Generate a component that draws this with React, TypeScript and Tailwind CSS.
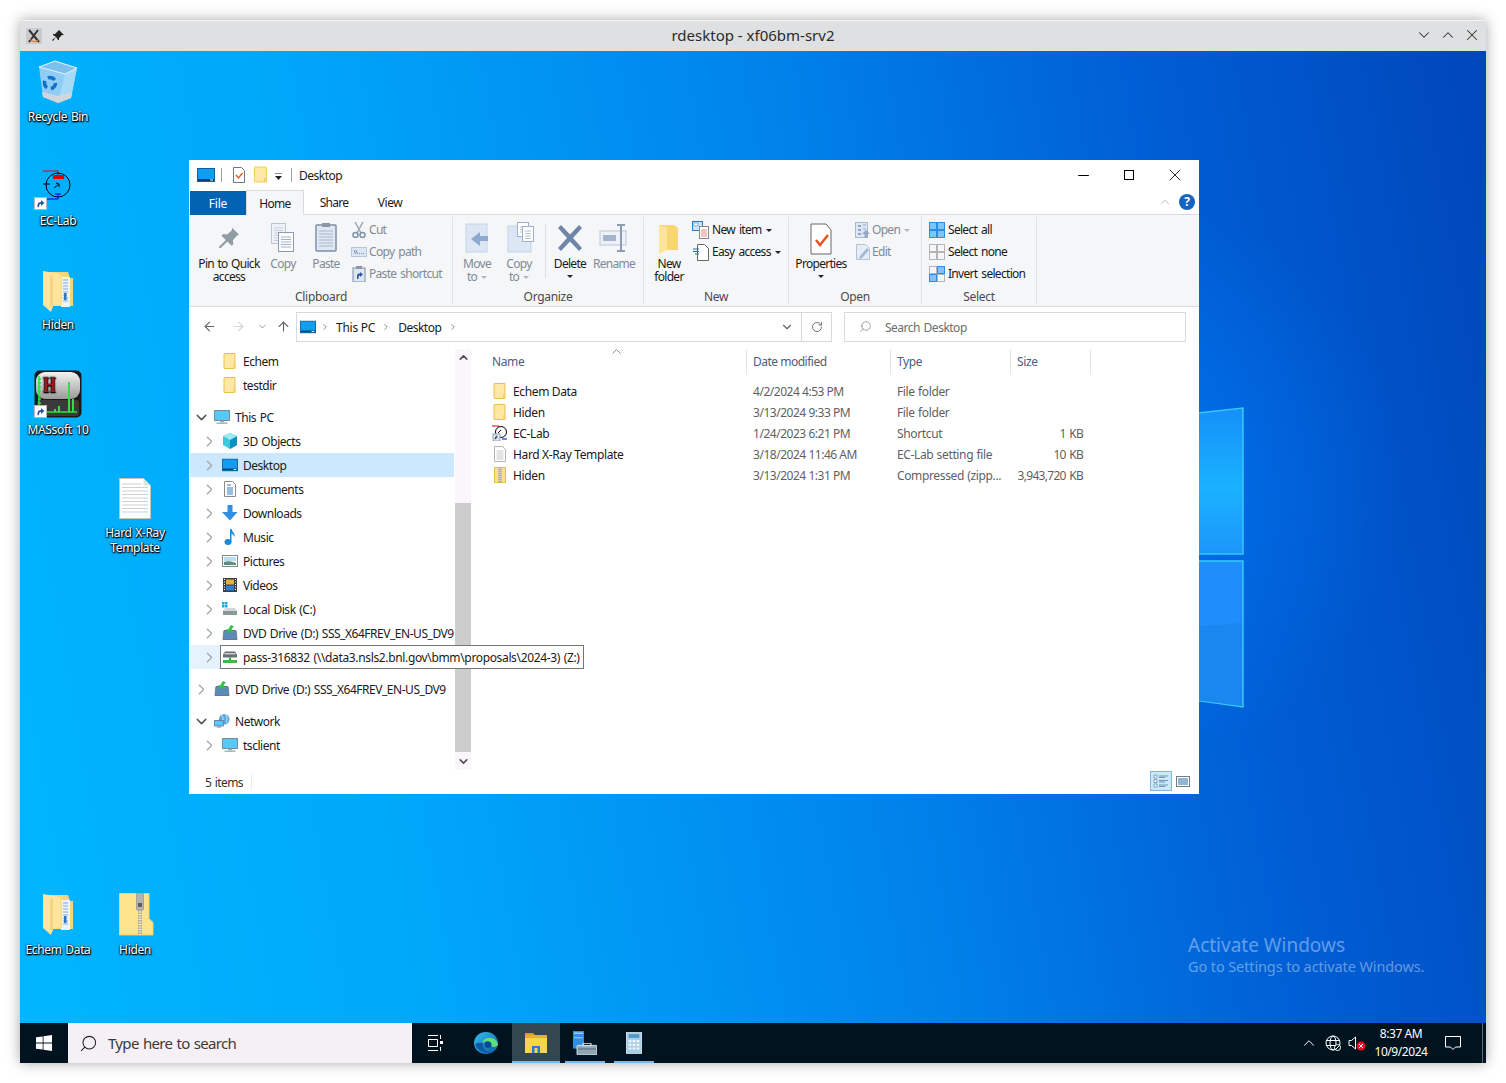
import { ArrowLeft, ArrowRight, ArrowUp, ChevronDown, ChevronRight, ChevronUp, Minus, RotateCw, Search, X } from 'lucide-react';
import type { ReactNode } from 'react';

/* ---------- small drawn icons ---------- */

function SmallFolder() {
  return (
    <svg width="16" height="16" viewBox="0 0 16 16">
      <path d="M2.5 .5h10.5v15h-10.5a.5 .5 0 0 1-.5-.5v-14a.5 .5 0 0 1 .5-.5z" fill="#ffe8a3" stroke="#e9c04c" />
      <rect x="11" y="11" width="2.5" height="4.5" fill="#f6d467" />
    </svg>
  );
}

function ZipSmall() {
  return (
    <svg width="16" height="16" viewBox="0 0 16 16">
      <rect x="2.5" y=".5" width="11" height="15" fill="#ffe08a" stroke="#e9c04c" />
      <rect x="6.5" y=".5" width="3" height="15" fill="#a8a8a8" />
      <path d="M8 1v14" stroke="#fff" strokeDasharray="1 1" />
    </svg>
  );
}

function PageSmall() {
  return (
    <svg width="16" height="16" viewBox="0 0 16 16">
      <path d="M2.5 .5h8l3 3v12h-11z" fill="#fff" stroke="#b5b5b5" />
      <path d="M4.5 5h7M4.5 7h7M4.5 9h7M4.5 11h7M4.5 13h7" stroke="#c8c8c8" />
    </svg>
  );
}

function EcLabSmall() {
  return (
    <svg width="16" height="16" viewBox="0 0 16 16">
      <path d="M0 1h7" stroke="#e00000" />
      <rect x="6" y="2" width="6" height="2" fill="#e00000" />
      <circle cx="9" cy="7" r="5.5" fill="#fff" stroke="#000" />
      <path d="M6 8l3-3" stroke="#000" />
      <path d="M10 14h5" stroke="#0000e0" />
      <rect x="1" y="9" width="7" height="7" fill="#dfe3ea" stroke="#9aa0aa" />
      <path d="M3 14l2-3" stroke="#1e5aa8" strokeWidth="1.5" />
    </svg>
  );
}

function MonitorBlue({ w = 18 }: { w?: number }) {
  return (
    <svg width={w} height="14" viewBox="0 0 18 14">
      <rect x=".5" y=".5" width="17" height="13" fill="#0f9ef0" stroke="#0f5f9c" />
      <rect x="1" y="11" width="16" height="2" fill="#0a3f78" />
      <rect x="13" y="11.5" width="3" height="1" fill="#fff" />
    </svg>
  );
}

function PcIcon() {
  return (
    <svg width="16" height="16" viewBox="0 0 16 16">
      <rect x=".5" y="1.5" width="15" height="10" fill="#58c8fb" stroke="#7c8a96" />
      <rect x="6" y="12" width="4" height="1.5" fill="#a8b4bd" />
      <rect x="2.5" y="13.5" width="11" height="1.5" fill="#a8b4bd" />
    </svg>
  );
}

function CubeIcon() {
  return (
    <svg width="16" height="16" viewBox="0 0 16 16">
      <path d="M8 0l7 3v9l-7 4-7-4v-9z" fill="#3cc8de" />
      <path d="M8 7l7-4v9l-7 4z" fill="#0d8fc4" />
      <path d="M8 0l7 3-7 4-7-4z" fill="#9ee9f2" />
    </svg>
  );
}

function DocsIcon() {
  return (
    <svg width="16" height="16" viewBox="0 0 16 16">
      <path d="M2.5 .5h8l3 3v12h-11z" fill="#fff" stroke="#8a8a8a" />
      <path d="M5 4h4M5 7h6M5 9h6M5 11h6M5 13h6" stroke="#2d7fc1" />
    </svg>
  );
}

function DownIcon() {
  return (
    <svg width="16" height="16" viewBox="0 0 16 16">
      <path d="M5.5 0h5v7h5l-7.5 8.5-8-8.5h5.500z" fill="#2f8fe6" />
    </svg>
  );
}

function MusicIcon() {
  return (
    <svg width="16" height="16" viewBox="0 0 16 16">
      <ellipse cx="6" cy="13" rx="3.500" ry="3" fill="#1a8ae0" />
      <path d="M8 13v-13h1.500c.5 3 4 4 3 8-.5-2-2-3-3-3.500v8.500z" fill="#1a8ae0" />
    </svg>
  );
}

function PicturesIcon() {
  return (
    <svg width="16" height="16" viewBox="0 0 16 16">
      <rect x=".5" y="2.5" width="15" height="11" fill="#fff" stroke="#7c8a96" />
      <rect x="2" y="4" width="12" height="4" fill="#b8dff5" />
      <path d="M2 12v-3c3-1.500 7-1 12 1v2z" fill="#5e8e74" />
    </svg>
  );
}

function VideosIcon() {
  return (
    <svg width="16" height="16" viewBox="0 0 16 16">
      <rect x="1" y="1" width="14" height="14" fill="#3a3f45" />
      <rect x="4" y="2.500" width="8" height="5" fill="#e8b23a" />
      <rect x="4" y="8.500" width="8" height="5" fill="#2f7fd0" />
      <path d="M2.500 2v12M13.500 2v12" stroke="#fff" strokeDasharray="1 1.500" />
    </svg>
  );
}

function DiskIcon() {
  return (
    <svg width="16" height="16" viewBox="0 0 16 16">
      <rect x="0" y="1" width="2.500" height="2.500" fill="#1aa3f0" />
      <rect x="3" y="1" width="2.500" height="2.500" fill="#1aa3f0" />
      <rect x="0" y="4" width="2.500" height="2.500" fill="#1aa3f0" />
      <rect x="3" y="4" width="2.500" height="2.500" fill="#1aa3f0" />
      <path d="M1 10l2-3h10l2 3z" fill="#d4d8dc" />
      <rect x="1" y="10" width="14" height="4" fill="#8d9499" />
      <rect x="11" y="11" width="2" height="1.500" fill="#4fd04f" />
    </svg>
  );
}

function DvdIcon() {
  return (
    <svg width="16" height="16" viewBox="0 0 16 16">
      <path d="M2 5.500h12l1 9h-14z" fill="#5a8ab8" stroke="#6c7a86" />
      <path d="M9 0l3 1.500-2.500 2.500 2 3-6 .5-1.500-3.500 2 .5z" fill="#2fc04a" />
    </svg>
  );
}

function NetDriveIcon() {
  return (
    <svg width="16" height="16" viewBox="0 0 16 16">
      <path d="M3 2.500h10l2 3v3h-14v-3z" fill="#6a6f74" />
      <rect x="2.500" y="4" width="11" height="1.500" fill="#c9cdd1" />
      <rect x="7" y="8.500" width="2" height="2.500" fill="#3aa53a" />
      <rect x="1" y="11" width="14" height="3" fill="#3fb93f" />
    </svg>
  );
}

function NetworkIcon() {
  return (
    <svg width="18" height="16" viewBox="0 0 18 16">
      <circle cx="11.500" cy="6" r="6" fill="#5da9dd" />
      <path d="M8 1c2 2 3 5 2 9M13 0c2 3 2 6 1 10" stroke="#d8ecf8" fill="none" />
      <rect x=".5" y="7.500" width="10" height="6" fill="#58c8fb" stroke="#5a7f9e" />
      <rect x="3" y="14" width="5" height="1.500" fill="#8aa0b0" />
    </svg>
  );
}

/* ---------- ribbon glyphs ---------- */

function LinedPage({ x, y, w, h, stroke, fill }: { x: number; y: number; w: number; h: number; stroke: string; fill: string }) {
  const lines = [];
  for (let ly = y + 5; ly < y + h - 2; ly += 2.5) lines.push(ly);
  return (
    <g>
      <rect x={x + 0.5} y={y + 0.5} width={w} height={h} fill={fill} stroke={stroke} />
      {lines.map((l) => (
        <path key={l} d={`M${x + 3} ${l}h${w - 5}`} stroke={stroke} strokeWidth="0.8" />
      ))}
    </g>
  );
}

function PinGlyph() {
  return (
    <svg width="32" height="32" viewBox="0 0 32 32">
      <g transform="translate(3.500 3.500) scale(.78)">
        <path d="M20 3l9 9-3 1-5 6 .5 5-2 2-5.500-5.500-8.500 8.500-2 0 0-2 8.500-8.500-5.500-5.500 2-2 5 .5 6-5z" fill="#8f9ca3" />
      </g>
    </svg>
  );
}

function CopyGlyph() {
  return (
    <svg width="32" height="32" viewBox="0 0 32 32">
      <LinedPage x={4} y={1} w={14} h={20} stroke="#b9c6d8" fill="#eef2f8" />
      <LinedPage x={11} y={10} w={15} h={19} stroke="#8b9db5" fill="#fff" />
    </svg>
  );
}

function PasteGlyph() {
  return (
    <svg width="32" height="32" viewBox="0 0 32 32">
      <rect x="6" y="3" width="20" height="26" rx="1" fill="#dfe7f2" stroke="#7f8ea6" strokeWidth="1.500" />
      <rect x="12" y="1" width="8" height="4" fill="#8b97a8" />
      <path d="M9 9h14M9 12h14M9 15h14M9 18h14M9 21h14M9 24h14" stroke="#a9b8cc" />
    </svg>
  );
}

function MoveGlyph() {
  return (
    <svg width="32" height="32" viewBox="0 0 32 32">
      <rect x="5" y="2" width="21" height="28" fill="#dce6f5" stroke="#c5d3e8" />
      <path d="M27 14v5h-9v-5z" fill="#8ea9cf" />
      <path d="M19 10v14l-9-7z" fill="#8ea9cf" />
    </svg>
  );
}

function CopyToGlyph() {
  return (
    <svg width="32" height="32" viewBox="0 0 32 32">
      <rect x="5" y="4" width="23" height="26" fill="#dce6f5" stroke="#c5d3e8" />
      <LinedPage x={14} y={0} w={11} h={14} stroke="#9fb0c8" fill="#fff" />
      <LinedPage x={19} y={4} w={11} h={15} stroke="#9fb0c8" fill="#fff" />
    </svg>
  );
}

function DeleteGlyph() {
  return (
    <svg width="32" height="32" viewBox="0 0 32 32">
      <path d="M4 6l3-3 9 9.500 9-9.500 3 3-9 10 9 10-3 3-9-9.500-9 9.500-3-3 9-10z" fill="#6f86a8" />
    </svg>
  );
}

function RenameGlyph() {
  return (
    <svg width="32" height="32" viewBox="0 0 32 32">
      <rect x="2" y="9" width="26" height="14" fill="#eef2f8" stroke="#b9c6d8" />
      <rect x="5" y="13" width="13" height="6" fill="#a4b4cc" />
      <path d="M19 3h8M23 3v26M19 29h8" stroke="#8c9cb4" strokeWidth="2" fill="none" />
    </svg>
  );
}

function NewFolderGlyph() {
  return (
    <svg width="32" height="34" viewBox="0 0 32 34">
      <path d="M6 3h15l4 3v22h-13l-6 3z" fill="#f8d676" />
      <path d="M6 3l8 3v22l-8 4z" fill="#fde59c" />
    </svg>
  );
}

function PropertiesGlyph() {
  return (
    <svg width="32" height="34" viewBox="0 0 32 34">
      <path d="M6 2h15l5 6v24h-20z" fill="#fff" stroke="#666" />
      <path d="M11 18l4 5 8-10" stroke="#e8521c" strokeWidth="2.500" fill="none" />
    </svg>
  );
}

function SmallGlyph({ kind }: { kind: string }) {
  if (kind === 'cut')
    return (
      <svg width="16" height="16" viewBox="0 0 16 16">
        <path d="M4 0l6 11M12 0l-6 11" stroke="#9aa8b8" strokeWidth="1.500" />
        <circle cx="4.500" cy="13" r="2.500" fill="none" stroke="#7c90ac" strokeWidth="1.500" />
        <circle cx="11.500" cy="13" r="2.500" fill="none" stroke="#7c90ac" strokeWidth="1.500" />
      </svg>
    );
  if (kind === 'path')
    return (
      <svg width="16" height="16" viewBox="0 0 16 16">
        <rect x=".5" y="3.500" width="15" height="9" fill="#dce6f5" stroke="#b9c6d8" />
        <path d="M3 6l1.500 4M5 6l1.500 4M8 9.500h1M10 9.500h1M12 9.500h1" stroke="#7c90ac" />
      </svg>
    );
  if (kind === 'shortcut')
    return (
      <svg width="16" height="16" viewBox="0 0 16 16">
        <rect x="2" y="2" width="12" height="14" fill="#dfe7f2" stroke="#7f8ea6" />
        <rect x="5" y="0" width="6" height="3" fill="#8b97a8" />
        <path d="M6 13v-3c0-2 1-2.500 3-2.500v-1.500l3 2.500-3 2.500v-1.500c-1 0-1.500 .5-1.500 3.500z" fill="#2c5c9c" />
      </svg>
    );
  if (kind === 'newitem')
    return (
      <svg width="18" height="18" viewBox="0 0 18 18">
        <rect x=".5" y=".5" width="10" height="9" fill="#cfe6f8" stroke="#2f79b5" />
        <rect x="2" y="2" width="4" height="3" fill="#fff" stroke="#2f79b5" strokeWidth=".5" />
        <rect x="7.500" y="5.500" width="9" height="12" fill="#fff" stroke="#888" />
        <path d="M9 9h6M9 11h6M9 13h6M9 15h6" stroke="#d88" />
      </svg>
    );
  if (kind === 'easy')
    return (
      <svg width="18" height="18" viewBox="0 0 18 18">
        <path d="M5.500 1.500h7l4 4v12h-11z" fill="#fff" stroke="#666" />
        <path d="M1 6h6M1 8.500h6M3 11h4" stroke="#1f6fb0" />
      </svg>
    );
  if (kind === 'open')
    return (
      <svg width="16" height="16" viewBox="0 0 16 16">
        <rect x=".5" y=".5" width="12" height="15" fill="#dce6f5" stroke="#aab8cc" />
        <path d="M3 3h3v2h-3zM3 7h3v2h-3zM3 11h3v2h-3z" fill="#93a6c2" />
        <path d="M8 3h3M8 7h3" stroke="#93a6c2" />
        <path d="M11 8l4 4h-2.500v4h-3v-4h-2.500z" fill="#93a6c2" />
      </svg>
    );
  if (kind === 'edit')
    return (
      <svg width="16" height="16" viewBox="0 0 16 16">
        <path d="M1.500 .5h9l4 4v11h-13z" fill="#e6edf7" stroke="#b4c2d6" />
        <path d="M12 4l-7 8-1 3 3-1 7-8z" fill="#a4b8d4" />
      </svg>
    );
  const on = 'fill-[#7fc4f5] stroke-[#2c8ce0]';
  const off = 'fill-[#f5f6f7] stroke-[#b5b5b5]';
  const cells = kind === 'all' ? [on, on, on, on] : kind === 'none' ? [off, off, off, off] : [off, on, on, off];
  return (
    <svg width="16" height="16" viewBox="0 0 16 16">
      <rect x=".5" y=".5" width="7" height="7" className={cells[0]} />
      <rect x="8.500" y=".5" width="7" height="7" className={cells[1]} />
      <rect x=".5" y="8.500" width="7" height="7" className={cells[2]} />
      <rect x="8.500" y="8.500" width="7" height="7" className={cells[3]} />
    </svg>
  );
}

function Caret({ light }: { light?: boolean }) {
  return <span className={`inline-block ml-1 align-middle border-x-[3px] border-t-[3px] border-x-transparent ${light ? 'border-t-[#b5b5b5]' : 'border-t-[#222]'}`} />;
}

function LargeBtn({ icon, label, sub, w, off, caret }: { icon: ReactNode; label: string; sub?: ReactNode; w: string; off?: boolean; caret?: boolean }) {
  return (
    <div className={`flex flex-col items-center shrink-0 pt-[5px] leading-[13px] tracking-[-0.7px] [word-spacing:1px] ${w} ${off ? 'text-[#7f8a96]' : ''}`}>
      <div className="h-[35px] flex items-start justify-center">{icon}</div>
      <div className="whitespace-nowrap">{label}</div>
      {sub && <div className="whitespace-nowrap">{sub}</div>}
      {caret && (
        <div className="h-[13px] -ml-1 flex items-center">
          <Caret />
        </div>
      )}
    </div>
  );
}

function SmallBtn({ kind, label, off, step, after }: { kind: string; label: string; off?: boolean; step: string; after?: ReactNode }) {
  return (
    <div className={`h-[22px] flex items-center whitespace-nowrap tracking-[-0.7px] [word-spacing:1.500px] ${off ? 'text-[#7f8a96]' : ''}`}>
      <span className={`flex shrink-0 ${step}`}>
        <SmallGlyph kind={kind} />
      </span>
      {label}
      {after}
    </div>
  );
}

function Group({ w, label, children }: { w: string; label: string; children: ReactNode }) {
  return (
    <div className={`flex flex-col shrink-0 border-r border-[#e1e2e3] mt-[2px] mb-[2px] ${w}`}>
      <div className="flex h-[71px]">{children}</div>
      <div className="text-center text-[#4a4a4a] leading-[14px] mt-[3px] tracking-[-0.3px]">{label}</div>
    </div>
  );
}

function Ribbon() {
  return (
    <div className="flex h-[92px] bg-[#f5f6f7] border-b border-[#dadbdc] pl-px">
      <Group w="w-[263px]" label="Clipboard">
        <div className="w-[6px]" />
        <LargeBtn w="w-[66px]" icon={<PinGlyph />} label="Pin to Quick" sub="access" />
        <LargeBtn w="w-[42px]" icon={<CopyGlyph />} label="Copy" off />
        <LargeBtn w="w-[44px]" icon={<PasteGlyph />} label="Paste" off />
        <div className="flex flex-col pt-[2px] pl-[3px]">
          <SmallBtn kind="cut" label="Cut" off step="w-[18px]" />
          <SmallBtn kind="path" label="Copy path" off step="w-[18px]" />
          <SmallBtn kind="shortcut" label="Paste shortcut" off step="w-[18px]" />
        </div>
      </Group>
      <Group w="w-[191px]" label="Organize">
        <div className="w-[3px]" />
        <LargeBtn w="w-[42px]" off icon={<MoveGlyph />} label="Move" sub={<>to<Caret light /></>} />
        <LargeBtn w="w-[42px]" off icon={<CopyToGlyph />} label="Copy" sub={<>to<Caret light /></>} />
        <div className="w-px h-[54px] mt-[7px] ml-[5px] mr-[2px] bg-[#dcdde0]" />
        <LargeBtn w="w-[44px]" icon={<DeleteGlyph />} label="Delete" caret />
        <LargeBtn w="w-[44px]" off icon={<RenameGlyph />} label="Rename" />
      </Group>
      <Group w="w-[145px]" label="New">
        <div className="w-[6px]" />
        <LargeBtn w="w-[38px]" icon={<NewFolderGlyph />} label="New" sub="folder" />
        <div className="flex flex-col pt-[2px] pl-[4px]">
          <SmallBtn kind="newitem" label="New item" step="w-[20px]" after={<Caret />} />
          <SmallBtn kind="easy" label="Easy access" step="w-[20px]" after={<Caret />} />
        </div>
      </Group>
      <Group w="w-[133px]" label="Open">
        <div className="w-[4px]" />
        <LargeBtn w="w-[56px]" icon={<PropertiesGlyph />} label="Properties" caret />
        <div className="flex flex-col pt-[2px] pl-[6px]">
          <SmallBtn kind="open" label="Open" off step="w-[17px]" after={<Caret light />} />
          <SmallBtn kind="edit" label="Edit" off step="w-[17px]" />
        </div>
      </Group>
      <Group w="w-[115px]" label="Select">
        <div className="flex flex-col pt-[2px] pl-[7px]">
          <SmallBtn kind="all" label="Select all" step="w-[19px]" />
          <SmallBtn kind="none" label="Select none" step="w-[19px]" />
          <SmallBtn kind="invert" label="Invert selection" step="w-[19px]" />
        </div>
      </Group>
    </div>
  );
}

/* ---------- navigation pane ---------- */

type NavRow = { label: string; icon: ReactNode; level: 0 | 1; chevron?: 'right' | 'down' | 'none'; selected?: boolean; gapBefore?: boolean };

const navRows: NavRow[] = [
  { label: 'Echem', icon: <SmallFolder />, level: 1, chevron: 'none' },
  { label: 'testdir', icon: <SmallFolder />, level: 1, chevron: 'none' },
  { label: 'This PC', icon: <PcIcon />, level: 0, chevron: 'down', gapBefore: true },
  { label: '3D Objects', icon: <CubeIcon />, level: 1 },
  { label: 'Desktop', icon: <MonitorBlue w={16} />, level: 1, selected: true },
  { label: 'Documents', icon: <DocsIcon />, level: 1 },
  { label: 'Downloads', icon: <DownIcon />, level: 1 },
  { label: 'Music', icon: <MusicIcon />, level: 1 },
  { label: 'Pictures', icon: <PicturesIcon />, level: 1 },
  { label: 'Videos', icon: <VideosIcon />, level: 1 },
  { label: 'Local Disk (C:)', icon: <DiskIcon />, level: 1 },
  { label: 'DVD Drive (D:) SSS_X64FREV_EN-US_DV9', icon: <DvdIcon />, level: 1 },
];

function NavItem({ row }: { row: NavRow }) {
  return (
    <div className={`flex items-center h-[24px] overflow-hidden ${row.level === 1 ? 'pl-[13px]' : 'pl-[5px]'} ${row.gapBefore ? 'mt-[8px]' : ''} ${row.selected ? 'bg-[#cce8ff]' : ''}`}>
      <span className="w-[12px] flex justify-center shrink-0">
        {row.chevron === 'down' && <ChevronDown size={17} strokeWidth={2} className="shrink-0 text-[#555]" />}
        {row.chevron === 'none' ? null : row.chevron !== 'down' && <ChevronRight size={17} strokeWidth={1.800} className="shrink-0 text-[#a6a6a6]" />}
      </span>
      <span className="ml-[7px] mr-[5px] flex w-[16px] justify-center shrink-0">{row.icon}</span>
      <span className="whitespace-nowrap pt-[2px] tracking-[-0.47px] [word-spacing:1px]">{row.label}</span>
    </div>
  );
}

function NavPane() {
  return (
    <div className="w-[264px] shrink-0 pt-[3px]">
      {navRows.map((r) => (
        <NavItem key={r.label} row={r} />
      ))}
      <div className="relative flex items-center h-[24px] pl-[13px] bg-[#e5f3ff]">
        <span className="w-[12px] flex justify-center">
          <ChevronRight size={17} strokeWidth={1.800} className="shrink-0 text-[#a6a6a6]" />
        </span>
        <div className="absolute left-[30px] top-0 z-10 h-[24px] flex items-center bg-white border border-[#767676] pl-px pr-[3px] whitespace-nowrap tracking-[-0.35px] [word-spacing:1px]">
          <span className="mr-[5px] flex">
            <NetDriveIcon />
          </span>
          <span className="pt-[2px]">{'pass-316832 (\\\\data3.nsls2.bnl.gov\\bmm\\proposals\\2024-3) (Z:)'}</span>
        </div>
      </div>
      <NavItem row={{ label: 'DVD Drive (D:) SSS_X64FREV_EN-US_DV9', icon: <DvdIcon />, level: 0, gapBefore: true }} />
      <NavItem row={{ label: 'Network', icon: <NetworkIcon />, level: 0, chevron: 'down', gapBefore: true }} />
      <NavItem row={{ label: 'tsclient', icon: <PcIcon />, level: 1 }} />
    </div>
  );
}

function NavScrollbar() {
  return (
    <div className="w-[16px] shrink-0 ml-px mt-[3px] bg-[#faf7fa] flex flex-col items-center">
      <div className="h-[17px] flex items-center justify-center">
        <ChevronUp size={13} strokeWidth={3} className="text-[#505050]" />
      </div>
      <div className="h-[137px]" />
      <div className="h-[249px] w-full bg-[#cdcdcd]" />
      <div className="h-[18px] flex items-center justify-center">
        <ChevronDown size={13} strokeWidth={3} className="text-[#505050]" />
      </div>
    </div>
  );
}

/* ---------- file list ---------- */

const files = [
  { name: 'Echem Data', icon: <SmallFolder />, date: '4/2/2024 4:53 PM', type: 'File folder', size: '' },
  { name: 'Hiden', icon: <SmallFolder />, date: '3/13/2024 9:33 PM', type: 'File folder', size: '' },
  { name: 'EC-Lab', icon: <EcLabSmall />, date: '1/24/2023 6:21 PM', type: 'Shortcut', size: '1 KB' },
  { name: 'Hard X-Ray Template', icon: <PageSmall />, date: '3/18/2024 11:46 AM', type: 'EC-Lab setting file', size: '10 KB' },
  { name: 'Hiden', icon: <ZipSmall />, date: '3/13/2024 1:31 PM', type: 'Compressed (zipp...', size: '3,943,720 KB' },
];

const headerCell = 'pl-[6px] pt-[4px] leading-[16px] border-r border-[#e5e5e5] h-[24px] mt-[4px]';

function FileList() {
  return (
    <div className="flex-1 pl-[15px]">
      <div className="relative grid grid-cols-[261px_144px_120px_80px] h-[28px] mb-[6px] text-[#4c607a]">
        <svg width="9" height="5" viewBox="0 0 9 5" className="absolute left-[126px] top-[3px]">
          <path d="M.5 4.500l4-4 4 4" fill="none" stroke="#8a8a8a" />
        </svg>
        <div className={headerCell}>Name</div>
        <div className={`${headerCell} tracking-[-0.5px]`}>Date modified</div>
        <div className={headerCell}>Type</div>
        <div className={headerCell}>Size</div>
      </div>
      {files.map((f) => (
        <div key={f.name + f.date} className="grid grid-cols-[261px_144px_120px_80px] h-[21px] items-center">
          <div className="flex items-center pl-[6px] tracking-[-0.36px]">
            <span className="flex mr-[5px]">{f.icon}</span>
            <span className="pt-[2px]">{f.name}</span>
          </div>
          <div className="pl-[6px] pt-[2px] text-[#5f5f5f] whitespace-nowrap tracking-[-0.47px]">{f.date}</div>
          <div className="pl-[6px] pt-[2px] text-[#5f5f5f] whitespace-nowrap tracking-[-0.36px] [word-spacing:0.500px]">{f.type}</div>
          <div className="pr-[8px] pt-[2px] text-right text-[#5f5f5f] whitespace-nowrap tracking-[-0.7px] [word-spacing:1px]">{f.size}</div>
        </div>
      ))}
    </div>
  );
}

/* ---------- explorer window ---------- */

function Explorer() {
  return (
    <div className="absolute left-[169px] top-[109px] w-[1010px] h-[634px] bg-white flex flex-col text-[12px] text-[#1a1a1a] tracking-[-0.38px]">
      <div className="flex items-center h-[30px] shrink-0">
        <span className="ml-[8px] flex"><MonitorBlue /></span>
        <span className="ml-[6px] w-px h-[14px] bg-[#a0a0a0]" />
        <svg width="14" height="18" viewBox="0 0 14 18" className="ml-[10px]">
          <path d="M1.500 1.500h8l3 3v12h-11z" fill="#fff" stroke="#777" />
          <path d="M4 9l2.500 3 4-5" stroke="#e8521c" strokeWidth="1.300" fill="none" />
        </svg>
        <svg width="14" height="18" viewBox="0 0 14 18" className="ml-[8px]">
          <rect x=".5" y="1" width="12" height="15" rx=".5" fill="#ffe8a3" stroke="#f0cf64" />
          <rect x="10" y="12" width="3" height="4" fill="#f6d467" />
        </svg>
        <svg width="8" height="7" viewBox="0 0 8 7" className="ml-[7px] mt-[3px]">
          <path d="M0 0h7" stroke="#222" />
          <path d="M0 3h7l-3.500 4z" fill="#222" />
        </svg>
        <span className="ml-[8px] w-px h-[14px] bg-[#a0a0a0]" />
        <span className="ml-[7px] pt-[2px] tracking-[-0.5px]">Desktop</span>
        <div className="ml-auto flex">
          <span className="w-[45px] h-[30px] flex items-center justify-center"><Minus size={17} strokeWidth={1.400} className="text-black" /></span>
          <span className="w-[46px] h-[30px] flex items-center justify-center"><span className="w-[10px] h-[10px] border border-black" /></span>
          <span className="w-[46px] h-[30px] mr-px flex items-center justify-center"><X size={20} strokeWidth={1} className="text-black" /></span>
        </div>
      </div>

      <div className="flex items-end h-[25px] shrink-0 pl-px border-b border-[#dadbdc]">
        <div className="w-[56px] h-[24px] pt-[2px] -mb-px bg-[#0063b1] text-white flex items-center justify-center tracking-[-0.2px]">File</div>
        <div className="w-[58px] h-[25px] pt-[2px] -mb-px bg-[#f5f6f7] border border-b-0 border-[#dadbdc] flex items-center justify-center tracking-[-0.7px]">Home</div>
        <div className="w-[60px] h-[24px] pt-[2px] flex items-center justify-center tracking-[-0.7px]">Share</div>
        <div className="w-[52px] h-[24px] pt-[2px] flex items-center justify-center tracking-[-0.4px]">View</div>
        <div className="ml-auto flex items-center h-[24px]">
          <ChevronUp size={14} strokeWidth={1.200} className="text-[#9a9a9a]" />
          <span className="ml-[7px] mr-[4px] w-[16px] h-[16px] rounded-full bg-[#1565c0] text-white font-bold flex items-center justify-center">?</span>
        </div>
      </div>

      <Ribbon />

      <div className="flex items-center h-[39px] shrink-0">
        <ArrowLeft size={15} strokeWidth={1.800} className="ml-[13px] text-[#666]" />
        <ArrowRight size={15} strokeWidth={1.800} className="ml-[14px] text-[#d4d4d4]" />
        <ChevronDown size={11} strokeWidth={2} className="ml-[11px] text-[#8a8a8a]" />
        <ArrowUp size={15} strokeWidth={1.800} className="ml-[8px] text-[#666]" />
        <div className="ml-[5px] w-[536px] h-[30px] border border-[#d9d9d9] flex items-center">
          <span className="ml-[3px] flex"><MonitorBlue w={16} /></span>
          <ChevronRight size={10} strokeWidth={2} className="ml-[4px] text-[#777]" />
          <span className="ml-[6px] pt-[2px] tracking-[-0.25px]">This PC</span>
          <ChevronRight size={10} strokeWidth={2} className="ml-[6px] text-[#777]" />
          <span className="ml-[7px] pt-[2px] tracking-[-0.5px]">Desktop</span>
          <ChevronRight size={10} strokeWidth={2} className="ml-[7px] text-[#777]" />
          <ChevronDown size={14} strokeWidth={2} className="ml-auto mr-[7px] text-[#666]" />
          <span className="w-[30px] h-full border-l border-[#d9d9d9] flex items-center justify-center">
            <RotateCw size={12} strokeWidth={1.800} className="text-[#666]" />
          </span>
        </div>
        <div className="ml-[12px] w-[342px] h-[30px] border border-[#d9d9d9] flex items-center text-[#6d6d6d]">
          <Search size={13} strokeWidth={1.200} className="ml-[14px] -scale-x-100 text-[#777]" />
          <span className="ml-[13px] pt-[2px] tracking-[-0.5px] [word-spacing:1px]">Search Desktop</span>
        </div>
      </div>

      <div className="flex h-[424px] shrink-0 pl-px">
        <NavPane />
        <NavScrollbar />
        <FileList />
      </div>

      <div className="flex items-center h-[24px] shrink-0 pl-[16px] text-[#333]">
        <span className="pt-[2px] tracking-[-0.6px] [word-spacing:1px]">5 items</span>
        <span className="ml-[8px] w-px h-[16px] bg-[#ececec]" />
        <div className="ml-auto mr-[6px] mb-[2px] flex items-center gap-px">
          <span className="w-[22px] h-[20px] bg-[#cce8ff] border border-[#7fb8e6] flex items-center justify-center">
            <svg width="16" height="14" viewBox="0 0 16 14">
              <path d="M1 1h3v3h-3zM1 5.500h3v3h-3zM1 10h3v3h-3z" fill="#fff" stroke="#5a7f9e" strokeWidth=".7" />
              <path d="M6 2h9M6 3.500h6M6 6.500h9M6 8h6M6 11h9M6 12.500h6" stroke="#5a7f9e" strokeWidth=".8" />
            </svg>
          </span>
          <span className="w-[20px] h-[20px] flex items-center justify-center">
            <svg width="14" height="11" viewBox="0 0 14 11">
              <rect x=".5" y=".5" width="13" height="10" fill="#fff" stroke="#6f7c88" />
              <rect x="2" y="2" width="10" height="7" fill="#8fb7d4" />
            </svg>
          </span>
        </div>
      </div>
    </div>
  );
}

/* ---------- desktop icons ---------- */

function BigFolder() {
  return (
    <svg width="48" height="46" viewBox="0 0 48 46">
      <path d="M10 3h24l2 6h3v28h-29z" fill="#f6d67a" />
      <path d="M27 8h9v30h-9z" fill="#eef3f8" />
      <path d="M29 11h5M29 14h5M29 17h5M29 20h5M29 23h5M29 26h4M29 29h5M29 32h5" stroke="#a8c2da" strokeWidth="1.400" />
      <path d="M30 24h2.500v7h-2.500z" fill="#2f78b8" />
      <path d="M25 6h3v30l-3 1z" fill="#fbe08f" />
      <path d="M9 2l17 3v31l-7 1-2 6-8-7z" fill="#fde59f" />
      <path d="M16 6l3 1v32l-3-2z" fill="#f4d682" />
    </svg>
  );
}

function ZipFolder() {
  return (
    <svg width="48" height="46" viewBox="0 0 48 46">
      <path d="M8.500 1.500h29.500v25l4 4v12.500h-33.500z" fill="#fde38c" stroke="#f6cf60" />
      <rect x="25.500" y="1" width="7" height="17" rx="1" fill="#b4b4b4" stroke="#8a8a8a" strokeWidth=".6" />
      <rect x="27" y="11" width="4" height="4" fill="#5f5f5f" />
      <path d="M29 18v25" stroke="#8f8f8f" strokeWidth="3.500" strokeDasharray="1.500 1" />
      <path d="M29 18v25" stroke="#e8e8e8" />
    </svg>
  );
}

function BigDoc() {
  return (
    <svg width="48" height="46" viewBox="0 0 48 46">
      <path d="M8.500 1.500h24l7 7v33h-31z" fill="#fff" stroke="#c4c4c4" />
      <path d="M32.500 1.500v7h7z" fill="#e2e2e2" />
      <path d="M11 7h19M11 10.500h26M11 14h26M11 17.500h26M11 21h26M11 24.500h26M11 28h26M11 31.500h26M11 35h26" stroke="#cfcfcf" strokeWidth="1.200" />
    </svg>
  );
}

function RecycleBin() {
  return (
    <svg width="48" height="46" viewBox="0 0 48 46">
      <path d="M5 8L21 2L43 9L37 39L24 44L9 38z" fill="#8fcdf5" />
      <path d="M31 15L24 44L37 39L43 9z" fill="#a6dbf8" />
      <path d="M5 8L21 2L43 9L31 15z" fill="#7cc0ee" stroke="#e4f4fd" />
      <path d="M8 33L24 37L38 33L37 39L24 44L9 38z" fill="#d0d6da" />
      <circle cx="16" cy="24" r="5.500" fill="none" stroke="#0f72c8" strokeWidth="3.500" strokeDasharray="7.500 4" />
    </svg>
  );
}

function ShortcutBadge() {
  return (
    <>
      <rect x=".5" y=".5" width="12" height="12" fill="#fff" stroke="#b8b8b8" />
      <path d="M3.500 10.500v-2.500c0-2 1.500-3 3.500-3v-2l3.500 3-3.500 3v-2c-1 0-2 .5-2 3z" fill="#2c5c9c" />
    </>
  );
}

function EcLabBig() {
  return (
    <svg width="48" height="46" viewBox="0 0 48 46">
      <path d="M9 1h15v4" fill="none" stroke="#e00000" />
      <rect x="19" y="5" width="11" height="4" fill="#e00000" />
      <circle cx="24" cy="15" r="12" fill="none" stroke="#000" />
      <path d="M9 14h7M20 18l5-4M22 13l3 1v3" fill="none" stroke="#000" />
      <path d="M21 24h6M24 24v5M13 29h11" fill="none" stroke="#0000e0" />
      <g transform="translate(0 27)"><ShortcutBadge /></g>
    </svg>
  );
}

function MasSoft() {
  return (
    <svg width="48" height="48" viewBox="0 0 48 48">
      <defs>
        <linearGradient id="masTop" x1="0" y1="0" x2="0" y2="1">
          <stop offset="0" stopColor="#f4f4f4" />
          <stop offset="1" stopColor="#9a9a9a" />
        </linearGradient>
      </defs>
      <rect x=".5" y=".5" width="47" height="47" rx="5" fill="#1a1a1a" />
      <rect x="2" y="2" width="44" height="27" rx="9" fill="url(#masTop)" />
      <rect x="3" y="30" width="42" height="16" rx="3" fill="#3a3a3a" />
      <text transform="translate(9 22) scale(.7 1)" fontFamily="Liberation Serif" fontWeight="700" fontSize="23" fill="#a01820">H</text>
      <path d="M5 6v36M7 9h-3M7 13h-3M7 17h-3M7 21h-3M7 25h-3M7 29h-3M7 33h-3M7 37h-3" stroke="#30e040" strokeWidth="1.500" />
      <path d="M5 42h38" stroke="#30e040" strokeWidth="1.500" />
      <path d="M21 42v-3M25 42v-6M35 42v-30M39 42v-13" stroke="#30e040" strokeWidth="2" />
      <g transform="translate(0 35)"><ShortcutBadge /></g>
    </svg>
  );
}

function DesktopIcon({ pos, icon, label, labelTop }: { pos: string; icon: ReactNode; label: string[]; labelTop: string }) {
  return (
    <div className={`absolute w-[76px] flex flex-col items-center text-white text-[12px] leading-[15px] tracking-[-0.35px] [word-spacing:1px] [text-shadow:0_1px_2px_#000,1px_1px_1px_#000,0_0_2px_#002] ${pos}`}>
      {icon}
      <div className={`text-center whitespace-nowrap ${labelTop}`}>
        {label.map((l) => (
          <div key={l}>{l}</div>
        ))}
      </div>
    </div>
  );
}

/* ---------- wallpaper logo ---------- */

function WallpaperLogo() {
  return (
    <svg width="120" height="360" viewBox="0 0 120 360" className="absolute left-[1160px] top-[345px]">
      <defs>
        <linearGradient id="pane" x1="0" y1="0" x2="0" y2="1">
          <stop offset="0" stopColor="#1590f8" />
          <stop offset=".55" stopColor="#1ab2ff" />
          <stop offset="1" stopColor="#1a96fa" />
        </linearGradient>
      </defs>
      <path d="M0 19l63-7v146h-63z" fill="url(#pane)" stroke="#36c8ff" strokeWidth="1.500" />
      <path d="M0 165h63v146l-63-9z" fill="#1e8ffa" stroke="#36c8ff" strokeWidth="1.500" />
      <path d="M0 232l62-5v83l-62-8z" fill="#1a86f0" />
    </svg>
  );
}

/* ---------- taskbar ---------- */

function TaskButton({ children, active }: { children: ReactNode; active?: boolean }) {
  return (
    <div className={`relative flex items-center justify-center h-full ${active ? 'w-[48px] bg-[#32474e]' : 'w-[40px] ml-[5px] mr-[4px]'}`}>
      {children}
      <span className="absolute bottom-0 inset-x-0 h-[2px] bg-[#76b9ed]" />
    </div>
  );
}

function Taskbar() {
  return (
    <div className="flex items-stretch h-[40px] bg-[#01131f] text-white text-[12px]">
      <div className="w-[48px] flex items-center justify-center">
        <svg width="16" height="16" viewBox="0 0 16 16">
          <path d="M0 2.300l6.700-.9v6.200h-6.700zM7.500 1.300l8.500-1.300v7.600h-8.500zM0 8.400h6.700v6.200l-6.700-.9zM7.500 8.400h8.500v7.600l-8.500-1.300z" fill="#fff" />
        </svg>
      </div>
      <div className="w-[344px] bg-[#f4f0f5] flex items-center text-[#3d3a3a] text-[15px] tracking-[-0.68px] [word-spacing:1px]">
        <Search size={19} strokeWidth={1.300} className="ml-[11px] -scale-x-100 text-[#222]" />
        <span className="ml-[10px]">Type here to search</span>
      </div>
      <div className="w-[48px] flex items-center justify-center">
        <svg width="16" height="16" viewBox="0 0 16 16" fill="none" stroke="#fff">
          <path d="M0 .5h10M0 15.500h10M.5 4.500h9v7h-9zM12.500 0v4M12.500 12v4" />
          <rect x="12" y="6" width="3" height="3" fill="#fff" stroke="none" />
        </svg>
      </div>
      <div className="w-[52px] flex items-center justify-center">
        <svg width="24" height="24" viewBox="0 0 24 26" preserveAspectRatio="none">
          <defs>
            <linearGradient id="edgeA" x1="0" y1="0" x2="1" y2="1">
              <stop offset="0" stopColor="#35c1f1" />
              <stop offset="1" stopColor="#0c59a4" />
            </linearGradient>
          </defs>
          <circle cx="12" cy="13" r="12" fill="url(#edgeA)" />
          <path d="M8 13c2-8 15-8 16 2-1 3-7 3-8 0 2-3-2-6-8-2z" fill="#5be07c" />
          <circle cx="14" cy="15" r="3.500" fill="#0a4a90" />
          <path d="M1 15c4 8 12 11 18 7-8 2-10-4-10-9-4-1-7 0-8 2z" fill="#0c59a4" />
        </svg>
      </div>
      <TaskButton active>
        <svg width="22" height="20" viewBox="0 0 22 20">
          <path d="M0 0h8l2 2h-10z" fill="#d89e1e" />
          <rect x="0" y="2" width="22" height="3" fill="#e8b02e" />
          <rect x="0" y="5" width="22" height="15" fill="#fcd34e" />
          <rect x="7" y="13" width="8" height="7" fill="#1f7fd0" />
          <rect x="9.500" y="15" width="3" height="5" fill="#fcd34e" />
        </svg>
      </TaskButton>
      <TaskButton>
        <svg width="24" height="24" viewBox="0 0 24 30" preserveAspectRatio="none">
          <rect x="0" y="0" width="11" height="22" fill="#2f8fe0" />
          <rect x="1" y="2" width="9" height="1.500" fill="#bfe0f8" />
          <rect x="1" y="8" width="9" height="1" fill="#bfe0f8" />
          <rect x="4" y="18" width="20" height="12" rx="1" fill="#8fa6b4" stroke="#dfe8ee" />
          <rect x="10" y="15.500" width="8" height="3" fill="none" stroke="#dfe8ee" />
          <rect x="5" y="22" width="18" height="1" fill="#44586a" />
        </svg>
      </TaskButton>
      <TaskButton>
        <svg width="16" height="22" viewBox="0 0 18 30" preserveAspectRatio="none">
          <rect x=".5" y=".5" width="17" height="29" fill="#a8cfe6" stroke="#d8e8f2" />
          <rect x="3" y="3" width="12" height="5" fill="#4f98c8" />
          <path d="M3 11h3v3h-3zM7.500 11h3v3h-3zM12 11h3v3h-3zM3 16h3v3h-3zM7.500 16h3v3h-3zM12 16h3v3h-3zM3 21h3v3h-3zM7.500 21h3v3h-3zM12 21h3v3h-3z" fill="#f2f6f9" />
        </svg>
      </TaskButton>
      <div className="ml-auto flex items-center">
        <ChevronUp size={18} strokeWidth={1.300} className="mr-[7px]" />
        <svg width="16" height="16" viewBox="0 0 16 16" fill="none" stroke="#fff" className="mr-[7px]">
          <circle cx="8" cy="8" r="7" />
          <ellipse cx="8" cy="8" rx="3" ry="7" />
          <path d="M1 5.500h14M1 10.500h14" />
          <circle cx="12.500" cy="12.500" r="3" fill="#01131f" />
          <path d="M10.500 14.500l4-4" />
        </svg>
        <svg width="18" height="16" viewBox="0 0 18 16" className="mr-[4px]">
          <path d="M1 5.500h2.500l4-3.500v12l-4-3.500h-2.500z" fill="none" stroke="#fff" />
          <circle cx="13" cy="11" r="4.500" fill="#e81123" />
          <path d="M11 9l4 4M15 9l-4 4" stroke="#fff" />
        </svg>
        <div className="w-[62px] text-center leading-[18px] tracking-[-0.45px]">
          <div>8:37 AM</div>
          <div>10/9/2024</div>
        </div>
        <svg width="16" height="16" viewBox="0 0 16 16" fill="none" stroke="#fff" className="ml-[13px] mr-[21px]">
          <path d="M.5 1.500h15v10.500h-5l-2.500 2.500-2.500-2.500h-5z" />
        </svg>
        <span className="w-px h-full bg-[#5d6a72] mr-[3px]" />
      </div>
    </div>
  );
}

/* ---------- page ---------- */

export default function App() {
  return (
    <div className="w-[1506px] h-[1083px] bg-white p-[20px] font-['Noto_Sans','Open_Sans',sans-serif]">
      <div className="flex flex-col h-full rounded-t-[3px] shadow-[0_0_14px_rgba(0,0,0,0.35)] overflow-hidden">
        <div className="relative flex items-center justify-center h-[31px] shrink-0 pb-[2px] bg-[#dfe0e1] border-t border-[#f4f4f4] text-[15px] text-[#2b2b2b]">
          <span className="absolute left-[6px] top-[7px] w-[16px] h-[16px] bg-[#c9cbcd] flex items-center justify-center">
            <svg width="14" height="14" viewBox="0 0 14 14">
              <path d="M2 1l10 12M11 1l-9 12" stroke="#333" strokeWidth="2" />
              <path d="M3 10a5 5 0 0 0 8 1" fill="none" stroke="#e87830" strokeWidth="1.200" />
            </svg>
          </span>
          <svg width="12" height="12" viewBox="0 0 12 12" className="absolute left-[32px] top-[9px]">
            <path d="M7 0l5 5-2 0-3 3 0 2-1 0-2-3-3 4-1-1 4-3-3-2 0-1 2 0 3-3z" fill="#222" />
          </svg>
          rdesktop - xf06bm-srv2
          <div className="absolute right-[5px] top-[5px] flex items-center gap-[6px] text-[#333]">
            <ChevronDown size={18} strokeWidth={1.400} />
            <ChevronUp size={18} strokeWidth={1.400} />
            <X size={18} strokeWidth={1.400} />
          </div>
        </div>

        <div className="relative flex-1 overflow-hidden bg-[linear-gradient(80deg,#00b6ff_0%,#00a8fa_25%,#0084ec_55%,#005fd6_78%,#0046ba_100%)]">
          <div className="absolute left-[860px] top-[150px] w-[520px] h-[560px] rounded-full bg-[radial-gradient(closest-side,rgba(0,130,255,0.55),rgba(0,110,255,0))]" />
          <WallpaperLogo />

          <DesktopIcon pos="left-[0px] top-[8px]" icon={<RecycleBin />} label={['Recycle Bin']} labelTop="mt-[4px]" />
          <DesktopIcon pos="left-[0px] top-[119px]" icon={<EcLabBig />} label={['EC-Lab']} labelTop="mt-[-3px]" />
          <DesktopIcon pos="left-[0px] top-[218px]" icon={<BigFolder />} label={['Hiden']} labelTop="mt-[2px]" />
          <DesktopIcon pos="left-[0px] top-[319px]" icon={<MasSoft />} label={['MASsoft 10']} labelTop="mt-[4px]" />
          <DesktopIcon pos="left-[77px] top-[426px]" icon={<BigDoc />} label={['Hard X-Ray', 'Template']} labelTop="mt-[2px]" />
          <DesktopIcon pos="left-[0px] top-[841px]" icon={<BigFolder />} label={['Echem Data']} labelTop="mt-[4px]" />
          <DesktopIcon pos="left-[77px] top-[841px]" icon={<ZipFolder />} label={['Hiden']} labelTop="mt-[4px]" />

          <Explorer />

          <div className="absolute left-[1168px] top-[881px] w-[240px] text-white/40">
            <div className="text-[19px] leading-[26px]">Activate Windows</div>
            <div className="text-[14.5px] leading-[17px] tracking-[-0.11px] whitespace-nowrap">Go to Settings to activate Windows.</div>
          </div>
        </div>

        <Taskbar />
      </div>
    </div>
  );
}
